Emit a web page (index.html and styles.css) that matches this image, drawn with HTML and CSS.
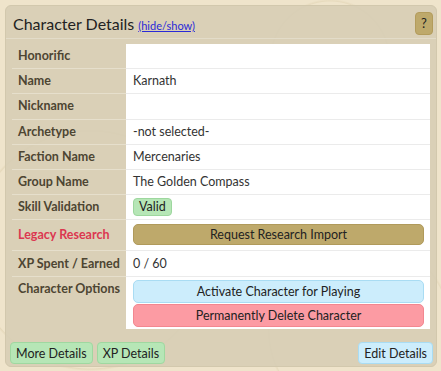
FILE: index.html
```html
<!DOCTYPE html>
<html lang="en">
<head>
    <meta charset="UTF-8"/>
    <meta name="viewport" content="width=device-width, initial-scale=1"/>
    <title>Character Details</title>
    <link rel="stylesheet" href="styles.css">
</head>
<body>

<div class="panel">
    <div class="panel-header">
        <h2>Character Details</h2>
        <a href="#" class="toggle">(hide/show)</a>
        <button class="help">?</button>
    </div>

    <table class="details">
        <tr><th>Honorific</th><td></td></tr>
        <tr><th>Name</th><td>Karnath</td></tr>
        <tr><th>Nickname</th><td></td></tr>
        <tr><th>Archetype</th><td>-not selected-</td></tr>
        <tr><th>Faction Name</th><td>Mercenaries</td></tr>
        <tr><th>Group Name</th><td>The Golden Compass</td></tr>
        <tr><th>Skill Validation</th><td><span class="badge">Valid</span></td></tr>
        <tr class="row-btn">
            <th class="legacy">Legacy Research</th>
            <td><button class="btn btn-gold">Request Research Import</button></td>
        </tr>
        <tr class="row-xp"><th>XP Spent / Earned</th><td>0 / 60</td></tr>
        <tr class="row-options">
            <th>Character Options</th>
            <td>
                <button class="btn btn-blue">Activate Character for Playing</button>
                <button class="btn btn-red">Permanently Delete Character</button>
            </td>
        </tr>
    </table>

    <div class="panel-footer">
        <button class="btn-small btn-green">More Details</button>
        <button class="btn-small btn-green">XP Details</button>
        <button class="btn-small btn-blue push">Edit Details</button>
    </div>
</div>

</body>
</html>
```

FILE: styles.css
```css
/* RESET BASICO */
* {
    margin: 0;
    padding: 0;
    box-sizing: border-box;
}

body {
    font-family: 'Lato', 'Liberation Sans', sans-serif;
    font-size: 12.5px;
    color: #2b2b2b;
    background-color: #efe4cb;
    background-image:
        radial-gradient(circle at 90px 250px, transparent 118px, rgba(190, 170, 120, 0.18) 119px, transparent 121px),
        radial-gradient(circle at 330px 60px, transparent 58px, rgba(190, 170, 120, 0.16) 59px, transparent 61px),
        radial-gradient(circle at 360px 330px, transparent 90px, rgba(190, 170, 120, 0.15) 91px, transparent 93px);
    padding: 5px 4px 5px 5px;
    min-height: 100vh;
}

.panel {
    background: rgba(214, 205, 180, 0.85);
    border: 1px solid #d2c8ad;
    border-radius: 6px;
    padding: 0 6px 2px 6px;
}

.panel-header {
    display: flex;
    align-items: center;
    height: 33px;
    margin: 0 -6px;
    padding: 0 3px 0 7px;
    border-bottom: 1px solid #e3dcc9;
}

.panel-header h2 {
    font-weight: 400;
    font-size: 16px;
    color: #222;
    margin-top: 2px;
}

.toggle {
    font-size: 11px;
    color: #2a2ad8;
    margin-left: 4px;
    margin-top: 6px;
}

.help {
    margin-left: auto;
    width: 18px;
    height: 23px;
    margin-top: 2px;
    background: #bea96b;
    border: 1px solid #b39c5c;
    border-radius: 4px;
    font-family: inherit;
    font-size: 13px;
    color: #222;
}

/* Tabla de datos */
.details {
    width: 100%;
    margin-top: 5px;
    border-collapse: collapse;
    table-layout: fixed;
}

.details th,
.details td {
    padding: 3px 6px;
    line-height: 18.2px;
    text-align: left;
    vertical-align: middle;
}

.details th {
    width: 114px;
    font-weight: 700;
    color: #4d4532;
    white-space: nowrap;
    border-bottom: 1px solid #e6dfcc;
}

.details td {
    background: #fff;
    padding-left: 7px;
    color: #333;
    border-bottom: 1px solid #ebebeb;
}

.details th.legacy {
    color: #dc3750;
}

.row-btn td {
    padding-top: 4px;
    padding-bottom: 5px;
}

.row-xp th,
.row-xp td {
    line-height: 19px;
}

.row-options th {
    vertical-align: top;
    border-bottom: none;
}

.row-options td {
    padding: 3px 7px 1px;
    border-bottom: none;
}

.badge {
    display: inline-block;
    height: 18px;
    line-height: 16px;
    padding: 0 5px;
    background: #b6e6b6;
    border: 1px solid #9dd79e;
    border-radius: 4px;
    color: #222;
}

.btn {
    display: block;
    width: 291px;
    font-family: inherit;
    font-size: 12.5px;
    color: #222;
    border-radius: 5px;
    text-align: center;
}

.btn-gold {
    height: 21px;
    background: #bea96b;
    border: 1px solid #b09a5b;
}

.btn-blue {
    background: #ccedfc;
    border: 1px solid #a9dcf3;
}

.btn-red {
    background: #fc9ba3;
    border: 1px solid #f28790;
}

.row-options .btn {
    height: 23px;
    margin-bottom: 1px;
}

/* Botones de abajo */
.panel-footer {
    display: flex;
    gap: 4px;
    margin: 13px -3px 0 -2px;
}

.btn-small {
    height: 22px;
    padding: 0 5px;
    font-family: inherit;
    font-size: 12.5px;
    color: #222;
    border-radius: 4px;
}

.btn-green {
    background: #b6e6b6;
    border: 1px solid #9fd8a0;
}

.push {
    margin-left: auto;
}
```
